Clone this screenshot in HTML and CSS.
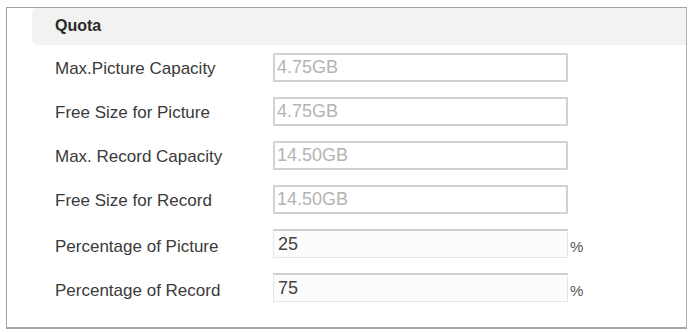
FILE: index.html
```html
<!DOCTYPE html>
<html>
<head>
<meta charset="utf-8">
<link rel="stylesheet" href="styles.css">
</head>
<body>
<div class="panel">
  <div class="header">Quota</div>
  <div class="rows">
    <div class="row">
      <span class="label">Max.Picture Capacity</span>
      <input class="field disabled" type="text" value="4.75GB" disabled>
    </div>
    <div class="row">
      <span class="label">Free Size for Picture</span>
      <input class="field disabled" type="text" value="4.75GB" disabled>
    </div>
    <div class="row">
      <span class="label">Max. Record Capacity</span>
      <input class="field disabled" type="text" value="14.50GB" disabled>
    </div>
    <div class="row">
      <span class="label">Free Size for Record</span>
      <input class="field disabled" type="text" value="14.50GB" disabled>
    </div>
    <div class="row row-low">
      <span class="label">Percentage of Picture</span>
      <input class="field editable" type="text" value="25">
      <span class="unit">%</span>
    </div>
    <div class="row row-low">
      <span class="label">Percentage of Record</span>
      <input class="field editable" type="text" value="75">
      <span class="unit">%</span>
    </div>
  </div>
</div>
</body>
</html>
```

FILE: styles.css
```css
html, body {
  margin: 0;
  padding: 0;
  background: #ffffff;
}

body {
  font-family: "Liberation Sans", Arial, sans-serif;
  color: #3c3c3c;
  padding: 7px 0 0 6px;
}

.panel {
  box-sizing: border-box;
  width: 681px;
  height: 322px;
  border: 1px solid #a2a2a2;
  border-right-color: #b0b0b0;
  border-bottom: 2px solid #a8a8a8;
}

.header {
  margin-left: 25px;
  height: 37px;
  background: #f2f2f2;
  border-radius: 5px 0 0 5px;
  font-weight: bold;
  font-size: 16px;
  line-height: 35px;
  padding-left: 23px;
  color: #2a2a2a;
}

.rows {
  display: flex;
  flex-direction: column;
  gap: 15px;
  padding: 8px 0 0 48px;
}

.row {
  display: flex;
  align-items: center;
  height: 29px;
}

.label {
  width: 218px;
  font-size: 17px;
  color: #3a3a3a;
  padding-top: 3px;
}

.row-low .label {
  padding-top: 7px;
}

.field {
  box-sizing: border-box;
  width: 295px;
  height: 29px;
  margin: 0;
  padding: 0 0 0 2px;
  font-family: "Liberation Sans", Arial, sans-serif;
  font-size: 18px;
  background: #ffffff;
  outline: none;
}

.disabled {
  border: 2px solid #d2d2d2;
  border-radius: 1px;
  color: #b4b4b4;
  -webkit-text-fill-color: #b4b4b4;
  opacity: 1;
}

.editable {
  border: 1px solid #e6e6e6;
  border-top: 2px solid #cfcfcf;
  color: #444444;
  padding-left: 4px;
  background: #fcfcfc;
}

.unit {
  margin-left: 2px;
  font-size: 15px;
  color: #555555;
  padding-top: 5px;
}
```
